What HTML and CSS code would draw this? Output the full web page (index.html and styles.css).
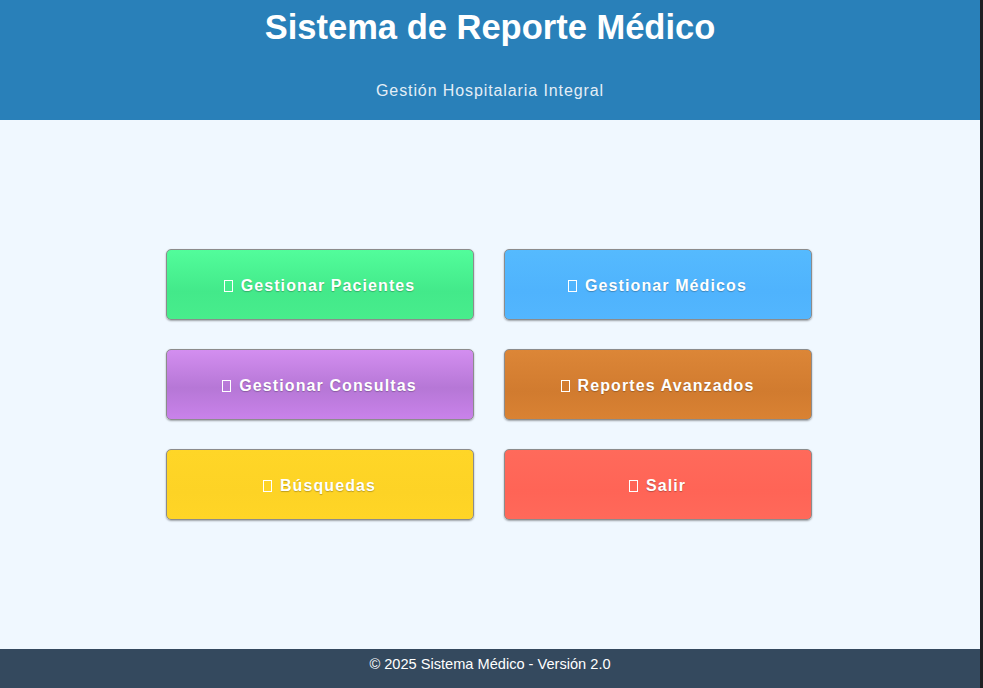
FILE: index.html
```html
<!DOCTYPE html>
<html lang="es">
<head>
<meta charset="utf-8">
<title>Sistema de Reporte Médico</title>
<link rel="stylesheet" href="styles.css">
</head>
<body>
<div class="page">
  <header class="header">
    <h1 class="title">Sistema de Reporte Médico</h1>
    <p class="subtitle">Gestión Hospitalaria Integral</p>
  </header>
  <main class="main">
    <div class="menu">
      <button class="btn btn-green"><span class="ico"></span>Gestionar Pacientes</button>
      <button class="btn btn-blue"><span class="ico"></span>Gestionar Médicos</button>
      <button class="btn btn-purple"><span class="ico"></span>Gestionar Consultas</button>
      <button class="btn btn-orange"><span class="ico"></span>Reportes Avanzados</button>
      <button class="btn btn-yellow"><span class="ico"></span>Búsquedas</button>
      <button class="btn btn-red"><span class="ico"></span>Salir</button>
    </div>
  </main>
  <footer class="footer">© 2025 Sistema Médico - Versión 2.0</footer>
</div>
</body>
</html>
```
FILE: styles.css
```css
html {
  background: #1f2023;
}
body {
  margin: 0;
  font-family: "Liberation Sans", Arial, sans-serif;
}
.page {
  width: 980px;
  height: 688px;
  display: flex;
  flex-direction: column;
  background: #f0f8ff;
}
.header {
  background: #2980b9;
  color: #fff;
  text-align: center;
  height: 120px;
  box-sizing: border-box;
  padding-top: 7px;
}
.title {
  margin: 0;
  font-size: 34.5px;
  font-weight: bold;
  line-height: 40px;
}
.subtitle {
  margin: 34px 0 0;
  font-size: 16px;
  line-height: 20px;
  letter-spacing: 0.9px;
  color: #e4eef6;
}
.main {
  flex: 1;
  display: flex;
  align-items: center;
  justify-content: center;
}
.menu {
  display: grid;
  grid-template-columns: 308px 308px;
  column-gap: 30px;
  row-gap: 29px;
  margin-left: -3px;
}
.btn {
  height: 71px;
  border: 1px solid #8c8c8c;
  border-radius: 5px;
  box-shadow: 0 1px 2px rgba(0,0,0,0.35);
  color: #fff;
  font-family: "Liberation Sans", Arial, sans-serif;
  font-size: 16px;
  font-weight: bold;
  letter-spacing: 1.1px;
  text-shadow: 0 1px 1px rgba(0,0,0,0.25);
  display: flex;
  align-items: center;
  justify-content: center;
  padding: 2px 0 0;
  cursor: pointer;
}
.ico {
  display: inline-block;
  width: 7px;
  height: 10px;
  border: 1px solid #fff;
  margin-right: 8px;
  margin-top: 1px;
}
.btn-green { background: linear-gradient(#52fd9b, #43e98a 60%, #48ed8c); }
.btn-blue { background: linear-gradient(#55bafe, #4fb3fd 60%, #53b6fe); }
.btn-purple { background: linear-gradient(#d38ef0, #b677d6 55%, #c982ea); }
.btn-orange { background: linear-gradient(#dc8637, #d17b2f 60%, #d98233); }
.btn-yellow { background: linear-gradient(#ffd627, #fdd325 60%, #ffd526); }
.btn-red { background: linear-gradient(#ff6a5b, #ff6456 60%, #ff695a); }
.footer {
  background: #34495e;
  color: #fff;
  height: 39px;
  box-sizing: border-box;
  padding-top: 7px;
  text-align: center;
  font-size: 14.6px;
  line-height: 17px;
}
```
